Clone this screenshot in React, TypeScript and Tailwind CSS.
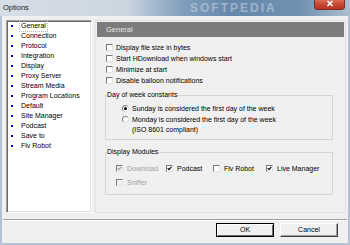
import React from 'react';

const listItems = [
  'General',
  'Connection',
  'Protocol',
  'Integration',
  'Display',
  'Proxy Server',
  'Stream Media',
  'Program Locations',
  'Default',
  'Site Manager',
  'Podcast',
  'Save to',
  'Flv Robot',
];

const Check = ({ checked, disabled }: { checked?: boolean; disabled?: boolean }) => (
  <span
    className={`relative block w-[7px] h-[7px] shrink-0 border border-t-[#7a7a7a] border-l-[#7a7a7a] border-b-[#e2e2e2] border-r-[#e2e2e2] ${
      disabled ? 'bg-[#f0f0f0]' : 'bg-white'
    }`}
  >
    {checked && (
      <svg viewBox="0 0 5 5" className="absolute inset-0 w-[5px] h-[5px]">
        <path
          d="M0.7 2.2 L2 3.6 L4.4 0.9"
          fill="none"
          stroke={disabled ? '#a0a0a0' : '#000'}
          strokeWidth="1.1"
        />
      </svg>
    )}
  </span>
);

const Radio = ({ checked }: { checked?: boolean }) => (
  <span className="flex w-[7px] h-[7px] shrink-0 items-center justify-center rounded-full border border-t-[#808080] border-l-[#808080] border-b-[#e0e0e0] border-r-[#e0e0e0] bg-white">
    {checked && <span className="block w-[3px] h-[3px] rounded-full bg-black" />}
  </span>
);

const CheckRow = ({ label }: { label: string }) => (
  <div className="flex h-[11px] items-center gap-[3px] pl-[9px]">
    <Check />
    <span>{label}</span>
  </div>
);

const ModuleItem = ({
  label,
  checked,
  disabled,
  width,
}: {
  label: string;
  checked?: boolean;
  disabled?: boolean;
  width: string;
}) => (
  <div className={`flex items-center gap-[4px] ${width} ${disabled ? 'text-[#a0a0a0]' : ''}`}>
    <Check checked={checked} disabled={disabled} />
    <span>{label}</span>
  </div>
);

export default function App() {
  return (
    <div className="relative w-[350px] h-[245px] overflow-hidden bg-[#b3c3d3] font-['Liberation_Sans',Arial,sans-serif] text-[7px] leading-[8px] text-black">
      {/* title bar */}
      <div className="relative flex h-[16px] items-center pl-[3px] bg-[linear-gradient(90deg,#d6dee7_0%,#ccd6e1_36%,#819ebc_52%,#6587ab_66%,#7192b2_86%,#aebfcf_100%)]">
        <span className="text-[7.5px] text-[#1a1a1a]">Options</span>
        <span className="absolute left-[190px] top-[1px] text-[12px] leading-[14px] font-bold tracking-[2px] text-[#c3d2e1] opacity-60">
          SOFTPEDIA
        </span>
        <div className="absolute right-[5px] top-[-4px] flex h-[14px] w-[31px] items-end justify-center rounded-b-[3px] border border-[#7d2b20] bg-[linear-gradient(180deg,#e58a78_0%,#d0503b_50%,#b8321f_100%)] pb-[2px]">
          <svg viewBox="0 0 8 7" className="w-[8px] h-[7px]">
            <path d="M1.5 1 L6.5 6 M6.5 1 L1.5 6" stroke="#fff" strokeWidth="1.6" />
          </svg>
        </div>
      </div>

      {/* body */}
      <div className="mx-[2px] h-[227px] bg-[#f0f0f0]">
        <div className="flex gap-[3px] pl-[4px] pt-[4px]">
          {/* tree list */}
          <div className="w-[86px] h-[193px] border border-t-[#a0a0a0] border-l-[#a0a0a0] border-b-white border-r-white bg-white shadow-[inset_1px_1px_0_#696969,inset_-1px_-1px_0_#e3e3e3]">
            {listItems.map((item, i) => (
              <div key={item} className="flex h-[10px] items-center gap-[8px] pl-[4px]">
                <span className="block w-[2px] h-[2px] bg-[#0000cc]" />
                <span className={i === 0 ? 'outline outline-1 outline-dotted outline-[#b5b5b5] outline-offset-[1px]' : ''}>
                  {item}
                </span>
              </div>
            ))}
          </div>

          {/* settings panel */}
          <div className="w-[251px] h-[193px] border border-[#e2e2e2] p-[1px]">
            <div className="flex h-[15px] items-center bg-[#7c7c7c] pl-[9px] text-[7.5px] text-[#e6e6e6]">
              General
            </div>

            <div className="mt-[5px]">
              <CheckRow label="Display file size in bytes" />
              <CheckRow label="Start HDownload when windows start" />
              <CheckRow label="Minimize at start" />
              <CheckRow label="Disable balloon notifications" />
            </div>

            <fieldset className="ml-[8px] mt-[5px] w-[228px] border border-[#d5d5d5] px-[1px] pb-[4px]">
              <legend className="leading-[8px]">Day of week constants</legend>
              <div className="mt-[4px] pl-[15px]">
                <div className="flex h-[11px] items-center gap-[3px]">
                  <Radio checked />
                  <span>Sunday is considered the first day of the week</span>
                </div>
                <div className="flex h-[11px] items-center gap-[3px]">
                  <Radio />
                  <span>Monday is considered the first day of the week</span>
                </div>
                <div className="flex h-[10px] items-center pl-[10px]">(ISO 8601 compliant)</div>
              </div>
            </fieldset>

            <fieldset className="ml-[8px] mt-[8px] w-[228px] border border-[#d5d5d5] px-[1px] pb-[6px]">
              <legend className="leading-[8px]">Display Modules</legend>
              <div className="mt-[7px] pl-[9px]">
                <div className="flex h-[11px] items-center">
                  <ModuleItem label="Download" checked disabled width="w-[50px]" />
                  <ModuleItem label="Podcast" checked width="w-[47px]" />
                  <ModuleItem label="Flv Robot" width="w-[53px]" />
                  <ModuleItem label="Live Manager" checked width="w-auto" />
                </div>
                <div className="mt-[3px] flex h-[11px] items-center">
                  <ModuleItem label="Sniffer" disabled width="w-[50px]" />
                </div>
              </div>
            </fieldset>
          </div>
        </div>

        {/* separator */}
        <div className="mx-[1px] mt-[6px] h-[2px] border-t border-t-[#a0a0a0] border-b border-b-white" />

        {/* buttons */}
        <div className="mt-[2px] flex justify-end gap-[6px] pr-[10px]">
          <button className="flex h-[14px] w-[58px] items-center justify-center border border-black bg-[#f0f0f0] shadow-[inset_1px_1px_0_#fff,inset_-1px_-1px_0_#696969]">
            OK
          </button>
          <button className="flex h-[14px] w-[58px] items-center justify-center border border-t-white border-l-white border-r-[#404040] border-b-[#404040] bg-[#f0f0f0] shadow-[inset_-1px_-1px_0_#a0a0a0]">
            Cancel
          </button>
        </div>
      </div>
    </div>
  );
}
